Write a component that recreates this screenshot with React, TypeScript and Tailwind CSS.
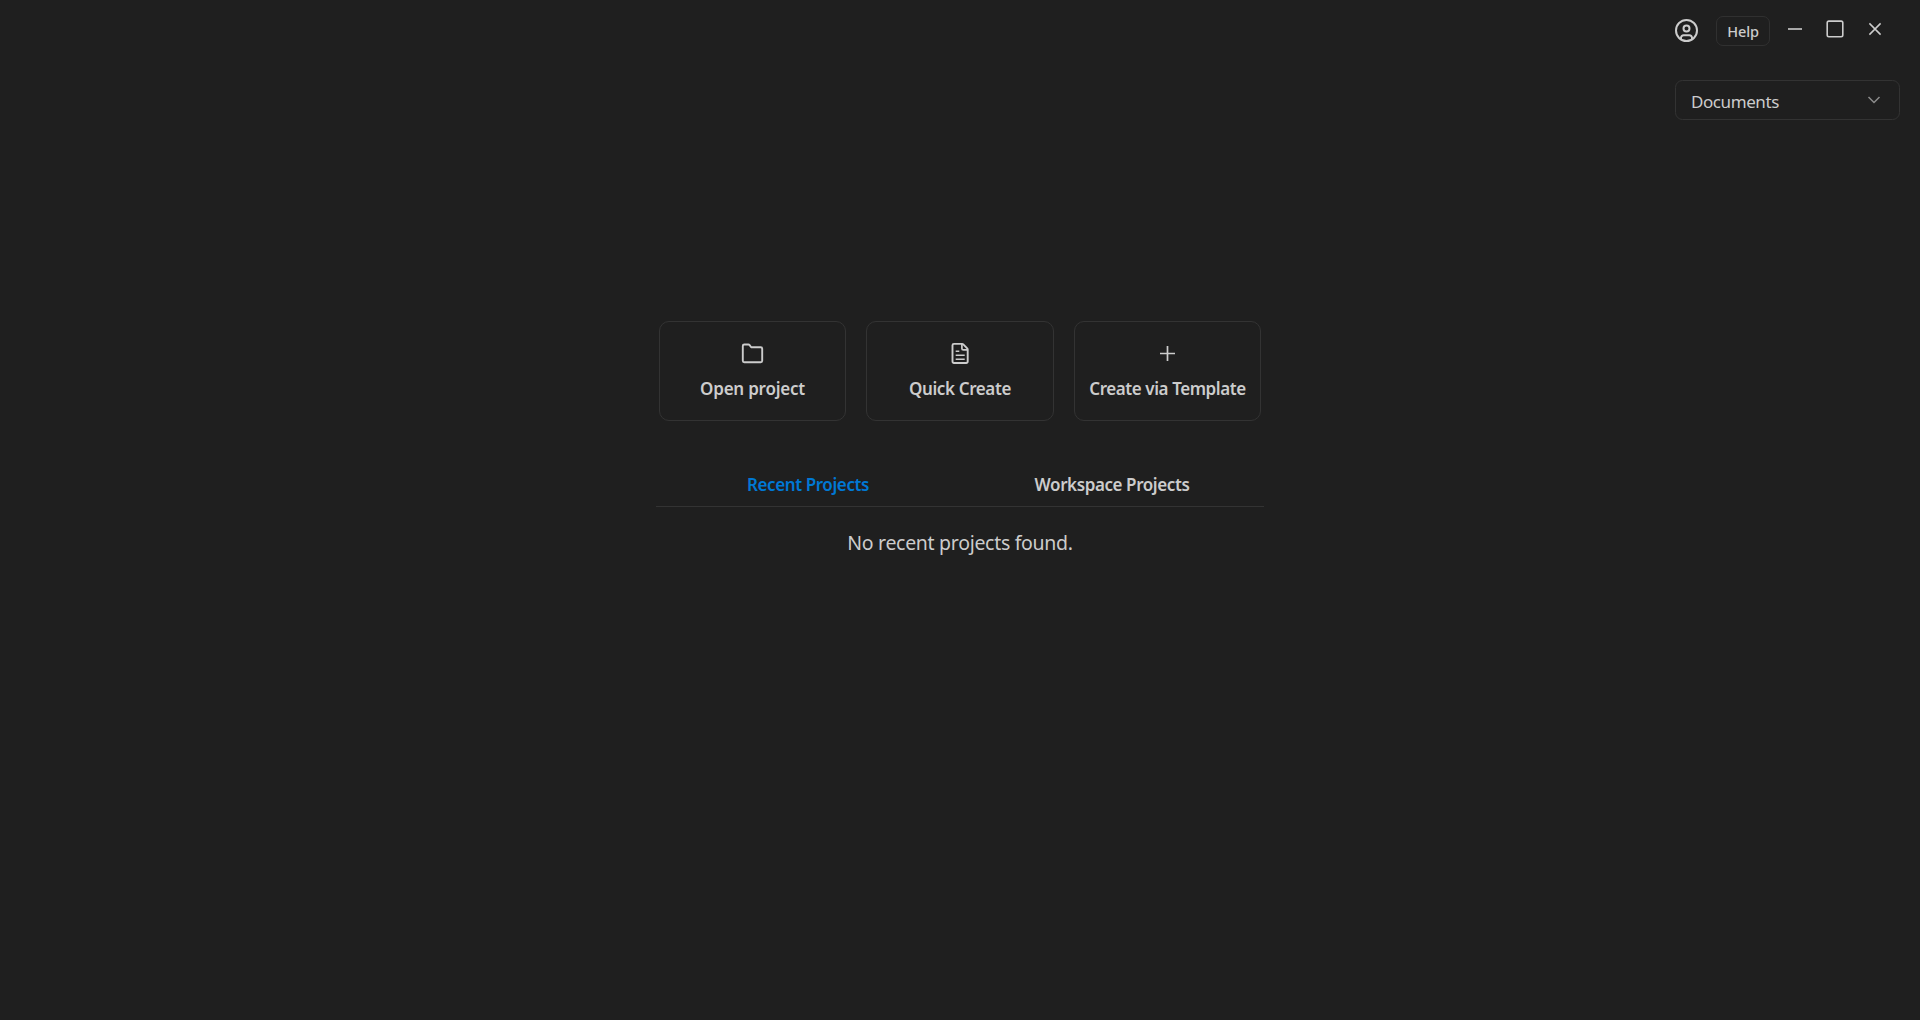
import type { ReactNode } from "react";

function AccountIcon() {
  return (
    <svg width="24" height="24" viewBox="0 0 24 24" fill="none" stroke="currentColor" strokeWidth="2">
      <circle cx="12.5" cy="12.5" r="10.500" />
      <circle cx="12.5" cy="10.4" r="3" />
      <path d="M7 21v-1.200a2.600 2.600 0 0 1 2.600-2.600h5.800a2.600 2.600 0 0 1 2.600 2.600v1.200" />
    </svg>
  );
}

function FolderIcon() {
  return (
    <svg width="24" height="24" viewBox="0 0 24 24" fill="none" stroke="currentColor" strokeWidth="1.9" strokeLinejoin="round">
      <path d="M2.800 5a1.500 1.500 0 0 1 1.500-1.500h4.100c.5 0 .9.2 1.200.6l1.600 2.200h9.500a1.500 1.500 0 0 1 1.500 1.500v12a1.500 1.500 0 0 1-1.500 1.500H4.300a1.500 1.500 0 0 1-1.500-1.500z" />
    </svg>
  );
}

function DocumentIcon() {
  return (
    <svg width="24" height="24" viewBox="0 0 24 24" fill="none" stroke="currentColor" strokeWidth="1.9" strokeLinejoin="round">
      <path d="M4.500 4.300a1.400 1.400 0 0 1 1.400-1.400h8.300c.4 0 .8.2 1.100.5l3.900 3.900c.3.3.5.7.5 1.100v12.200a1.400 1.400 0 0 1-1.400 1.400H5.900a1.400 1.400 0 0 1-1.400-1.400z" />
      <path d="M13.900 3v4.400a1.500 1.500 0 0 0 1.500 1.500h4.200" strokeWidth="1.700" />
      <path d="M7.700 10.200h3.600M7.700 14.200h9M7.700 18.200h9" strokeWidth="1.500" />
    </svg>
  );
}

function PlusIcon() {
  return (
    <svg width="24" height="24" viewBox="0 0 24 24" stroke="currentColor" strokeWidth="1.700">
      <path d="M12.500 5v15M5 12.500h15" />
    </svg>
  );
}

function ProjectCard({ icon, children }: { icon: ReactNode; children: ReactNode }) {
  return (
    <button className="flex h-[100px] w-[187.5px] flex-col items-center rounded-[10px] border border-[#333333] pt-[19px] text-[17px] leading-6 font-semibold whitespace-nowrap">
      <span className="mr-px">{icon}</span>
      <span className="mt-3">{children}</span>
    </button>
  );
}

export default function App() {
  return (
    <div className="flex h-[1020px] flex-col bg-[#1f1f1f] font-['Noto_Sans','Open_Sans',sans-serif] text-[#cccccc]">
      <header className="flex h-[60px] items-start justify-end pt-4 pr-[25px]">
        <button className="mt-[2px] mr-[18px]">
          <AccountIcon />
        </button>
        <button className="mr-[5px] flex h-[30px] w-[54px] items-center justify-center rounded-[7px] border border-[#303030] text-[14.5px] leading-5 font-medium tracking-[-0.1px]">
          Help
        </button>
        <button className="-mt-[2px] flex h-8 w-10 justify-center">
          <svg width="20" height="32" viewBox="0 0 20 32" stroke="currentColor" strokeWidth="1.6">
            <path d="M3 15h14" />
          </svg>
        </button>
        <button className="-mt-[2px] flex h-8 w-10 justify-center">
          <svg width="20" height="32" viewBox="0 0 20 32" fill="none" stroke="currentColor" strokeWidth="1.6">
            <rect x="2.2" y="7.1" width="15.6" height="15.6" rx="1.7" />
          </svg>
        </button>
        <button className="-mt-[2px] flex h-8 w-10 justify-center">
          <svg width="20" height="32" viewBox="0 0 20 32" stroke="currentColor" strokeWidth="1.5">
            <path d="m4.400 9.400 11.200 11.200M15.600 9.400 4.400 20.600" />
          </svg>
        </button>
      </header>

      <div className="flex h-[60px] justify-end pt-5 pr-5">
        <button className="flex h-10 w-[225px] items-center justify-between rounded-[7.5px] border border-[#333333] pr-[18px] pl-[15px] text-[17px] leading-6 tracking-[-0.42px]">
          <span className="pt-[3px]">Documents</span>
          <svg width="14" height="14" viewBox="0 0 14 14" fill="none" stroke="#8c8c8c" strokeWidth="1.5">
            <path d="m1.500 4 5.500 5.500L12.500 4" />
          </svg>
        </button>
      </div>

      <main className="mx-auto flex w-[608px] flex-col items-center pt-[201px]">
        <div className="flex gap-5">
          <ProjectCard icon={<FolderIcon />}>
            <span className="tracking-[-0.23px]">Open project</span>
          </ProjectCard>
          <ProjectCard icon={<DocumentIcon />}>
            <span className="tracking-[-0.38px]">Quick Create</span>
          </ProjectCard>
          <ProjectCard icon={<PlusIcon />}>
            <span className="tracking-[-0.42px]">Create via Template</span>
          </ProjectCard>
        </div>

        <nav className="mt-[41px] grid h-[45px] w-full grid-cols-2 border-b border-[#333333] pt-[11px] text-[17px] leading-6 font-semibold">
          <button className="h-6 tracking-[-0.4px] text-[#0078d4]">Recent Projects</button>
          <button className="h-6 tracking-[-0.41px]">Workspace Projects</button>
        </nav>

        <p className="mt-[22px] text-[19.5px] leading-7 tracking-[-0.3px]">No recent projects found.</p>
      </main>
    </div>
  );
}
